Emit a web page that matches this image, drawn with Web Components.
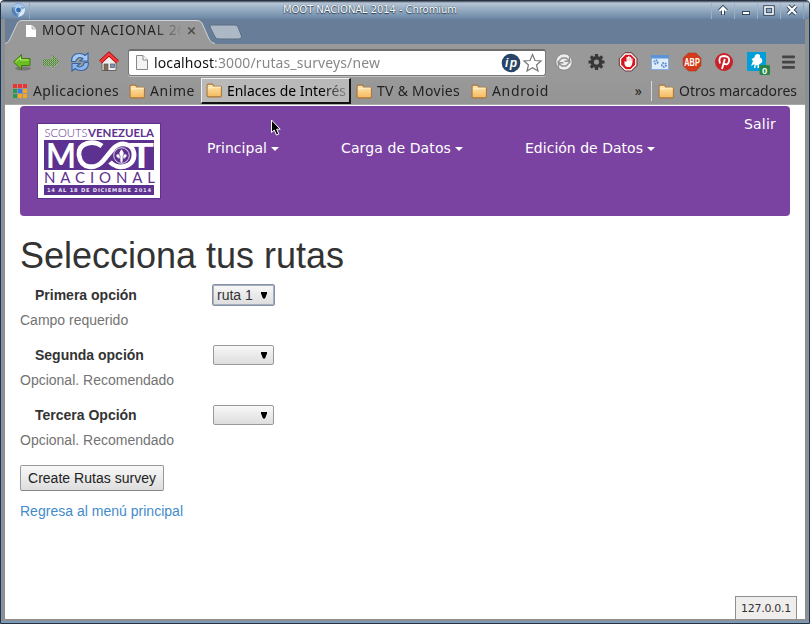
<!DOCTYPE html>
<html lang="es"><head><meta charset="utf-8"><title>MOOT NACIONAL 2014</title>
<style>
html,body{margin:0;height:100%;overflow:hidden}
body{font:14px/20px "Liberation Sans",Arial,sans-serif;color:#333}
</style></head><body>
<browser-window>
 <title-bar slot="chrome"><fit-text w="174">MOOT NACIONAL 2014 - Chromium</fit-text></title-bar>
 <tab-strip slot="chrome"><fit-text w="161">MOOT NACIONAL 2014</fit-text></tab-strip>
 <tool-bar slot="chrome"></tool-bar>
 <bookmark-bar slot="chrome">
  <book-mark kind="apps" style="width:118px"><fit-text w="86">Aplicaciones</fit-text></book-mark>
  <book-mark style="width:71px"><fit-text w="45">Anime</fit-text></book-mark>
  <book-mark class="active" style="width:150px"><fit-text w="119">Enlaces de Interés</fit-text></book-mark>
  <book-mark style="width:115px"><fit-text w="83">TV &amp; Movies</fit-text></book-mark>
  <book-mark style="width:90px"><fit-text w="57">Android</fit-text></book-mark>
  <book-mark slot="end"><fit-text w="118">Otros marcadores</fit-text></book-mark>
 </bookmark-bar>
 <site-nav>
  <nav-item><fit-text w="60">Principal</fit-text></nav-item>
  <nav-item><fit-text w="110">Carga de Datos</fit-text></nav-item>
  <nav-item><fit-text w="118">Edición de Datos</fit-text></nav-item>
  <fit-text slot="exit" w="32">Salir</fit-text>
 </site-nav>
 <route-form>
  <route-field label="Primera opción" value="ruta 1" class="focus">Campo requerido</route-field>
  <route-field label="Segunda opción">Opcional. Recomendado</route-field>
  <route-field label="Tercera Opción">Opcional. Recomendado</route-field>
 </route-form>
 <status-bubble slot="overlay"><fit-text w="50">127.0.0.1</fit-text></status-bubble>
 <mouse-pointer slot="overlay"></mouse-pointer>
</browser-window>
<script>
function define(name, html, setup) {
  customElements.define(name, class extends HTMLElement {
    constructor() {
      super();
      this.attachShadow({mode: 'open'}).innerHTML = html;
    }
    connectedCallback() { if (setup) setup(this, this.shadowRoot); }
  });
}
const folder = `<svg width="17" height="15" viewBox="0 0 16 14"><defs><linearGradient id="f" x2="0" y2="1"><stop stop-color="#ffe9b5"/><stop offset="1" stop-color="#f5b95c"/></linearGradient></defs><path d="M1 12V2.500Q1 1 2.300 1H6L7.500 3H13.500Q14.500 3 14.500 4V12Q14.500 13 13.500 13H2Q1 13 1 12Z" fill="url(#f)" stroke="#a9753a"/><path d="M2 4.500H6.500L7.500 3.800H14" fill="none" stroke="#fff3d4" stroke-width=".9"/></svg>`;

define('browser-window', `<style>
:host{display:flex;flex-direction:column;position:relative;box-sizing:border-box;width:810px;height:624px;overflow:hidden;background:#8f8f8f;border:1px solid #26323f;border-radius:4px 4px 0 0}
:host::before{content:"";position:absolute;inset:19px 0 0 0;border:solid #7b98b8;border-width:0 1px 2px 1px;pointer-events:none}
main{flex:1;margin:0 4px 4px;background:#fff;padding:1px 15px 0;overflow:hidden}
</style><slot name="chrome"></slot><main><slot></slot></main><slot name="overlay"></slot>`);

define('title-bar', `<style>
:host{display:flex;align-items:center;height:18px;background:linear-gradient(#3b4556 0,#b8c6d6 2px,#a6b9cc 5px,#6f8ba8 17px,#67819c);font:10px/18px "DejaVu Sans",sans-serif;color:#fff;text-shadow:0 0 1px #2a3d55,0 1px 1px #2a3d55}
.app{width:29px;padding-left:9px;box-sizing:border-box;border-right:1px solid #94a7bb;height:17px}
.t{flex:1;padding-left:253px;overflow:hidden}
.b{width:22px;height:17px;border-left:1px solid #9cafc3;display:flex;justify-content:center}
.b:last-child{margin-right:5px;border-right:1px solid #8fa4ba}
svg{display:block;margin-top:-1px}
</style>
<div class="app"><svg width="17" height="17" viewBox="0 0 17 17"><circle cx="8.500" cy="9" r="7" fill="#7ba7d5"/><path d="M2 6Q8.500-.5 15 6L9 6Z" fill="#a8c8e8"/><path d="M15 7Q16 14 8 16L11 9Z" fill="#dbeaf5"/><path d="M2 6Q0 14 8 16L5 9Z" fill="#5580b5"/><circle cx="8.500" cy="9" r="3" fill="#356eb3" stroke="#cfe0f0"/></svg></div>
<div class="t"><slot></slot></div>
<div class="b"><svg width="14" height="17"><path d="M7 14V7M3.500 10L7 6.500 10.500 10" fill="none" stroke="#34475b" stroke-width="4"/><path d="M7 13.500V7M3.500 10L7 6.500 10.500 10" fill="none" stroke="#fff" stroke-width="2"/></svg></div>
<div class="b"><svg width="14" height="17"><rect x="3" y="10" width="8" height="4" fill="#34475b"/><rect x="4" y="11" width="6" height="2" fill="#fff"/></svg></div>
<div class="b"><svg width="14" height="17"><rect x="3" y="6" width="8" height="7" fill="none" stroke="#34475b" stroke-width="3.500"/><rect x="3" y="6" width="8" height="7" fill="none" stroke="#fff" stroke-width="1.600"/></svg></div>
<div class="b"><svg width="14" height="17"><path d="M3 5L11 13M11 5L3 13" stroke="#34475b" stroke-width="4"/><path d="M3 5L11 13M11 5L3 13" stroke="#fff" stroke-width="2.200"/></svg></div>`);

define('tab-strip', `<style>
:host{display:block;height:25px;margin:0 4px;background:#687e98;position:relative;--squeeze:.9;font:15px/20px "Noto Sans","Open Sans",sans-serif;color:#222}
.shape{position:absolute;left:0;top:0}
.row{position:relative;display:flex;align-items:center;height:20px;padding-left:19px}
.t{width:139px;margin-left:5px;overflow:hidden;white-space:nowrap;-webkit-mask:linear-gradient(90deg,#000 112px,transparent 141px)}
.x{margin-left:6px}
</style><svg class="shape" width="245" height="25"><path d="M0 25Q3 24.500 5 20L12.500 4Q14 1 17 1H192Q195 1 197 4L204 20Q206 24.500 210 25Z" fill="#999"/><path d="M0 24.500Q3 24.500 5 20L12.500 4Q14 1.500 17 1.500H192Q195 1.500 197 4L204 20Q206 24.500 210 24.500" fill="none" stroke="#cfd3d7"/><path d="M206.500 6H230Q232 6 233 8L236.500 17Q237 20 234 20H214Q211 20 210 18L205 8Q204.500 6 206.500 6Z" fill="#acb8c5" stroke="#5a6c80"/></svg>
<div class="row"><svg width="12" height="15" style="margin-top:5px;margin-left:1px"><path d="M1 1H7L11 5V13H1Z" fill="#fff"/><path d="M7 1V5H11" fill="#ddd" stroke="#aaa" stroke-width=".8"/></svg><div class="t"><slot></slot></div>
<svg class="x" width="9" height="20"><path d="M1.300 8.500L7.700 15M7.700 8.500L1.300 15" stroke="#4c4c4c" stroke-width="1.600"/></svg></div>`);

define('tool-bar', `<style>
:host{display:flex;align-items:center;height:34px;margin:0 4px;background:#999;padding:2px 0 0 7px;box-sizing:border-box}
svg{display:block;flex:none;overflow:visible}
.nav{display:flex;gap:9px;width:116px;flex:none}
.url{box-sizing:border-box;width:418px;height:27px;border:1px solid #777;border-top:2px solid #6d6d6d;border-radius:3px;background:#fff;display:flex;align-items:center;flex:none;padding:0 2px 0 6px;--squeeze:.93;font:15px/22px "Noto Sans","Open Sans",sans-serif;color:#888;box-shadow:0 1px #c0c0c0}
.url b{font-weight:400;color:#111}
.url fit-text{margin:-2px auto 0 5px}
.ext{display:flex;align-items:center;gap:12px;margin-left:8px}
</style>
<div class="nav">
<svg width="20" height="20" viewBox="0 0 20 20"><ellipse cx="11" cy="16.500" rx="8" ry="2" fill="#777"/><path d="M1.500 10L9.500 2.500V6.500H18V13.500H9.500V17.500Z" fill="#6dbd22" stroke="#3c7a12"/><path d="M3.500 10L8.500 5.500V8H16.500" fill="none" stroke="#c0ef7a"/></svg>
<svg width="20" height="20" viewBox="0 0 20 20" shape-rendering="crispEdges"><defs><pattern id="c" width="2" height="2" patternUnits="userSpaceOnUse"><rect width="1" height="1" fill="#3f8f18"/><rect x="1" y="1" width="1" height="1" fill="#5a9c34"/><rect x="1" width="1" height="1" fill="#a9b8a0"/></pattern></defs><path d="M18.500 10L10.500 2V6.500H2V13.500H10.500V18Z" fill="url(#c)"/></svg>
<svg width="20" height="20" viewBox="0 0 20 20"><path d="M1.500 9.500Q1.500 1.500 9.500 1.500Q13 1.500 15 3.500L18 1V9H10L13 6.500Q8 3.500 5.500 9.500Z" fill="#a9c9f3" stroke="#3465a4" stroke-width="1.100"/><path d="M18.500 10.500Q18.500 18.500 11 18.500Q7 18.500 5 16.500L2 19V11.500H10L7 14Q12 17 14.500 10.500Z" fill="#8fb6ea" stroke="#3465a4" stroke-width="1.100"/></svg>
<svg width="20" height="20" viewBox="0 0 20 20"><path d="M3 10V18.500H17V10L10 4Z" fill="#eee" stroke="#666"/><rect x="5" y="12" width="4" height="6.500" fill="#866b50" stroke="#555" stroke-width=".7"/><rect x="11.500" y="12" width="4" height="3.500" fill="#789cc8" stroke="#555" stroke-width=".7"/><path d="M1.500 10L10 2L18.500 10" fill="none" stroke="#a00" stroke-width="4"/><path d="M1.500 10L10 2L18.500 10" fill="none" stroke="#f23b3b" stroke-width="2.600"/></svg>
</div>
<div class="url"><svg width="14" height="17"><path d="M1.500 1.500H8L12.500 6V15.500H1.500Z" fill="#f3f3f3" stroke="#888"/><path d="M8 1.500V6H12.500" fill="#fff" stroke="#888"/></svg><fit-text w="226"><b>localhost</b>:3000/rutas_surveys/new</fit-text>
<svg width="20" height="20" viewBox="0 0 20 20"><circle cx="10" cy="10" r="9.300" fill="#284467"/><text x="4" y="14" font-family="Liberation Sans" font-size="12" font-weight="bold" font-style="italic" fill="#fff" textLength="12">ip</text></svg>
<svg width="22" height="20" viewBox="0 0 22 20"><path d="M11.500 1.500L14 7.500L20 8L15.500 12L17 18L11.500 14.800L6 18L7.500 12L3 8L9 7.500Z" fill="#fff" stroke="#777" stroke-width="1.200"/></svg></div>
<div class="ext">
<svg width="20" height="20"><circle cx="10" cy="10" r="8.200" fill="#eee" stroke="#777" stroke-width=".7"/><path d="M3.500 10.500L8 6H12L15 8.500M10.500 9.300H15.500V4.500M16.500 9.500L12 14H8L5 11.500M9.500 10.700H4.500V15.500" fill="none" stroke="#909090" stroke-width="1.400"/></svg>
<svg width="20" height="20"><g stroke="#383838" stroke-width="3.200"><path d="M10.500 2V18M2.500 10H18.500M4.800 4.300L16.200 15.700M16.200 4.300L4.800 15.700"/></g><circle cx="10.500" cy="10" r="6" fill="#383838"/><circle cx="10.500" cy="10" r="2.600" fill="#999"/></svg>
<svg width="20" height="20"><path d="M7 .8H13.500L19 6.500V13.500L13.500 19H7L1.300 13.500V6.500Z" fill="#d8151b" stroke="#333" stroke-width=".8"/><path d="M7.300 2H13L17.800 6.800V13L13 17.800H7.300L2.500 13V6.800Z" fill="none" stroke="#fff" stroke-width="1.300"/><path d="M6.500 9V12Q7 15 10 15H12Q14 14 14.500 10V6.500H13V5H11.500V4.300H10V5H8.500V10Z" fill="#fff"/><path d="M10 5.500V9M11.700 5.500V9M13.200 7V9" stroke="#d88" stroke-width=".5"/></svg>
<svg width="20" height="20"><rect x="1.500" y="3.500" width="17" height="14" fill="#dfecfa" stroke="#82aee0"/><rect x="1" y="3" width="18" height="3.500" fill="#5c93d8"/><g fill="none" stroke="#5b8fcf" stroke-dasharray="1.500 .8"><circle cx="6" cy="10" r="1.700" stroke-width="2"/><circle cx="14" cy="13" r="2" stroke-width="2"/></g></svg>
<svg width="20" height="20"><path d="M6.500 1H14L19 6V13.500L14 19H6.500L1 13.500V6Z" fill="#d43b1a" stroke="#aa3016" stroke-width=".5"/><text x="2.300" y="13.700" font-family="Liberation Sans" font-size="10" font-weight="bold" fill="#fff" textLength="15.500" lengthAdjust="spacingAndGlyphs">ABP</text></svg>
<svg width="20" height="20"><circle cx="10" cy="10" r="9" fill="#cb2027"/><path d="M6 11.500Q3.500 4 10.500 4Q16 4.500 15 9.500Q13.500 14 10.300 11.500M10.800 7L8 17" fill="none" stroke="#fff" stroke-width="1.900"/></svg>
<svg width="24" height="24" viewBox="0 -2 24 24" style="margin-right:-4px"><rect x="1" y="0" width="19" height="19" fill="#009fd8"/><path d="M5.500 7L8.500 5.500Q8.500 2 12 2L14 3V5.500Q17 6.500 16 10.500L13 12.500V16H11.500V13L9.500 13.500V16H8L8.500 12L5 14L7 9Z" fill="#fff"/><rect x="13.500" y="13" width="10.500" height="10" rx="1.500" fill="#278547"/><text x="16" y="21.500" font-family="Liberation Sans" font-weight="bold" font-size="9.500" fill="#fff">0</text></svg>
<svg width="20" height="20"><g fill="#444"><rect x="4" y="3.500" width="13" height="2.800" rx="1"/><rect x="4" y="8.700" width="13" height="2.800" rx="1"/><rect x="4" y="14" width="13" height="2.800" rx="1"/></g></svg>
</div>`);

define('bookmark-bar', `<style>
:host{display:flex;align-items:center;height:27px;margin:0 4px;padding-left:6px;background:linear-gradient(#999,#949494);border-bottom:1px solid #aaa;box-sizing:border-box;--squeeze:.93;font:15px/22px "Noto Sans","Open Sans",sans-serif;color:#222}
.end{margin-left:auto;display:flex;align-items:center;padding-right:8px}
.more{margin-right:9px;font-size:14px}
.sep{width:1px;height:20px;background:#d5d8dd;margin-right:6px}
</style><slot></slot><div class="end"><span class="more">»</span><span class="sep"></span><slot name="end"></slot></div>`);

define('book-mark', `<style>
:host{display:flex;align-items:center;flex:none;box-sizing:border-box;height:26px;white-space:nowrap}
:host(.active){background:#b9b9b9;border:1px solid #eee;border-right:2px solid #111;border-bottom:2px solid #111;padding-left:4px;margin:0 5px 0 1px;color:#000;overflow:hidden}
:host(.active) .t{-webkit-mask:linear-gradient(90deg,#000 95px,#0004 119px);margin-top:-2px}
.t{margin-top:-3px}
svg{margin-right:4px;flex:none}
</style><span class="i" style="display:flex"></span><span class="t"><slot></slot></span>`, (el, root) => {
  const cols = ['#e33', '#e33', '#e33', '#2a9a50', '#3b78e7', '#f5a623', '#2a9a50', '#f5a623', '#f5a623'];
  root.querySelector('.i').innerHTML = el.getAttribute('kind') === 'apps'
    ? `<svg width="17" height="15" style="margin-right:5px">${cols.map((c, i) => `<rect x="${2 + i % 3 * 5}" y="${(i / 3 | 0) * 5}" width="4" height="4" fill="${c}"/>`).join('')}</svg>` : folder;
});

define('site-nav', `<style>
:host{display:flex;height:110px;border-radius:4px;background:#7b43a1;box-sizing:border-box;padding:17px 14px 0 17px;font:14px/20px "DejaVu Sans",Verdana,sans-serif;color:#fff}
nav{display:flex;gap:62px;padding-top:15px;margin-left:46px;flex:1}
.exit{margin-top:-9px;height:20px}
svg{display:block;flex:none}
</style>
<svg width="124" height="76" viewBox="0 0 124 76" font-family="Lato,sans-serif">
<rect x=".5" y=".5" width="123" height="75" fill="#fff" stroke="#5d3190"/>
<text x="7.500" y="14" font-size="11.500" fill="#5d3190" font-weight="300" textLength="43" lengthAdjust="spacingAndGlyphs">SCOUTS</text>
<text x="51" y="14" font-size="11.500" fill="#5d3190" font-weight="bold" textLength="66" lengthAdjust="spacingAndGlyphs">VENEZUELA</text>
<rect x="7" y="17" width="110" height="30" fill="#5d3190"/>
<text x="9" y="45" font-size="35" font-weight="bold" fill="#fff" textLength="30" lengthAdjust="spacingAndGlyphs">M</text>
<text x="92" y="45" font-size="35" font-weight="bold" fill="#fff" textLength="25" lengthAdjust="spacingAndGlyphs">T</text>
<path d="M65 23C57 17 41 19 42 32C44 47 59 46 66 38L75 27C82 17 97 20 97 32C97 45 80 47 73 39" fill="none" stroke="#fff" stroke-width="4.800"/>
<circle cx="84.500" cy="32.500" r="7.800" fill="#5d3190" stroke="#fff" stroke-width=".8"/>
<path d="M84.500 26.500Q81 30 83.500 33V38L84.500 40L85.500 38V33Q88 30 84.500 26.500M83 34.500Q79.500 35.500 79.500 32Q82 29.500 83 34.500M86 34.500Q89.500 35.500 89.500 32Q87 29.500 86 34.500M81 35.500H88" fill="#fff" stroke="#fff" stroke-width=".3"/>
<text x="7" y="59.700" font-size="15" fill="#5d3190" textLength="111">NACIONAL</text>
<rect x="7" y="62" width="110" height="10" fill="#5d3190"/>
<text x="10" y="69" font-size="5.200" font-family="DejaVu Sans" font-weight="bold" fill="#e9e0f2" textLength="104">14 AL 18 DE DICIEMBRE 2014</text>
</svg><nav><slot></slot></nav><div class="exit"><slot name="exit"></slot></div>`);

define('nav-item', `<style>
:host{display:flex;align-items:center;height:20px}
i{border:4px solid transparent;border-top-color:#fff;border-bottom:0;margin:2px 0 0 4px}
</style><slot></slot><i></i>`);

define('route-form', `<style>
:host{display:block}
h1{font:500 36px/40px "Liberation Sans",Arial,sans-serif;margin:20px 0 9px}
button{display:block;box-sizing:border-box;width:144px;height:26px;padding:0;border:1px solid #999;border-bottom-color:#888;border-radius:2px;background:linear-gradient(#f8f8f8,#ddd);font:14px/22px "Liberation Sans",Arial,sans-serif;color:#222;margin:0 0 10px}
a{color:#428bca;text-decoration:none}
</style><h1><fit-text w="324">Selecciona tus rutas</fit-text></h1><slot></slot><button><fit-text w="128">Create Rutas survey</fit-text></button><a href="#"><fit-text w="163">Regresa al menú principal</fit-text></a>`);

define('route-field', `<style>
:host{display:block;height:60px}
.r{display:flex;height:20px;align-items:center}
b{width:178px;padding-left:15px}
.s{box-sizing:border-box;width:61px;height:20px;border:1px solid #999;border-radius:2px;background:linear-gradient(#f8f8f8,#ddd);display:flex;align-items:center;justify-content:space-between;padding:0 6px 0 4px}
:host(.focus) .s{width:63px;height:22px;margin:-1px;border:1px solid #8793a5;box-shadow:inset 0 0 0 1px #a5afbd;padding:0 7px 0 4px}
p{margin:5px 0 0;color:#737373}
svg{flex:none}
</style><div class="r"><b></b><span class="s"><span class="v"></span><svg width="6" height="7"><path d="M0 0H6V1.500L4 6.500H2L0 1.500Z" fill="#000"/></svg></span></div><p><slot></slot></p>`, (el, root) => {
  root.querySelector('b').textContent = el.getAttribute('label');
  root.querySelector('.v').textContent = el.getAttribute('value') || '';
});

define('status-bubble', `<style>
:host{position:absolute;left:734px;top:595px;width:62px;height:23px;box-sizing:border-box;background:#f0eded;border:1px solid #8f8f8f;border-bottom:0;padding-left:5px;font:11px/23px "DejaVu Sans",sans-serif;color:#333}
</style><slot></slot>`);

define('mouse-pointer', `<style>
:host{position:absolute;left:269px;top:118px}svg{display:block}
</style><svg width="12" height="18"><path d="M1.500 1V13.500L4.200 11L6.500 16L8.800 15L6.700 10.200H10.200Z" fill="#000" stroke="#fff"/></svg>`);

/* Spreads its text over a set width; --squeeze narrows the glyphs themselves. */
define('fit-text', `<style>:host{display:inline-block;white-space:nowrap}span{display:inline-block;transform-origin:0 50%}</style><span><slot></slot></span>`, (el, root) => {
  const span = root.querySelector('span');
  const n = el.textContent.length, w = +el.getAttribute('w');
  const k = parseFloat(getComputedStyle(el).getPropertyValue('--squeeze')) || 1;
  span.style.letterSpacing = (w / k - span.getBoundingClientRect().width) / n + 'px';
  if (k !== 1) span.style.transform = `scaleX(${k})`;
  el.style.width = w + 'px';
});
</script>
</body></html>
